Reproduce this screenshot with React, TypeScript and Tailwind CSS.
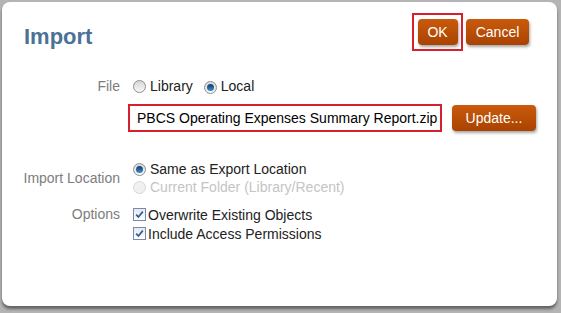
import React from "react";

const font = { fontFamily: '"Liberation Sans", Arial, sans-serif' };

function Radio({ checked, disabled }: { checked?: boolean; disabled?: boolean }) {
  return (
    <span
      className={`inline-flex items-center justify-center w-[13px] h-[13px] rounded-full border ${
        disabled ? "border-[#d8d8d8] bg-[#f0f0f0]" : "border-[#8e8f8f] bg-gradient-to-b from-[#d6d6d6] to-[#f8f8f8]"
      }`}
    >
      {checked && (
        <span className="w-[7px] h-[7px] rounded-full bg-gradient-to-b from-[#0f3b6a] to-[#3f8fd0]" />
      )}
    </span>
  );
}

function Check() {
  return (
    <span className="inline-flex items-center justify-center w-[13px] h-[13px] border border-[#7a8aa8] bg-gradient-to-b from-[#e4e8f0] to-[#ffffff]">
      <svg width="9" height="9" viewBox="0 0 9 9">
        <path d="M1.2 4.6 L3.4 7 L7.8 1.6" stroke="#2f5c9a" strokeWidth="1.7" fill="none" />
      </svg>
    </span>
  );
}

function Btn({ children, w }: { children: React.ReactNode; w: string }) {
  return (
    <button
      className={`${w} h-[26px] rounded-[4px] bg-gradient-to-b from-[#c95a0c] to-[#a94302] text-white text-[14px] shadow-[1px_2px_3px_rgba(0,0,0,0.35)] flex items-center justify-center`}
    >
      {children}
    </button>
  );
}

export default function App() {
  return (
    <div className="w-[561px] h-[313px] bg-[#b4b4b4] pt-[2px] pl-[2px]" style={font}>
      <div className="w-[555px] h-[304px] bg-white rounded-[8px] shadow-[0_3px_3px_rgba(0,0,0,0.45)] flex flex-col">
        <div className="flex items-start h-[70px]">
          <div className="pl-[22px] pt-[20px] text-[22px] font-bold text-[#4c7196] leading-[30px]">Import</div>
          <div className="ml-auto flex items-center pt-[11px] pr-[28px]">
            <div className="border-2 border-[#d7202e] w-[51px] h-[38px] flex items-center justify-center">
              <Btn w="w-[40px]">OK</Btn>
            </div>
            <div className="ml-[3px]">
              <Btn w="w-[63px]">Cancel</Btn>
            </div>
          </div>
        </div>

        <div className="grid grid-cols-[118px_1fr] text-[14px] leading-[18px]">
          <div className="text-right text-[#7d7d7d] pt-[5px]">File</div>
          <div className="flex items-center gap-[3px] pl-[13px] pt-[5px] text-[#222]">
            <Radio />
            <span className="ml-[1px]">Library</span>
            <span className="ml-[8px]"><Radio checked /></span>
            <span className="ml-[1px]">Local</span>
          </div>

          <div />
          <div className="flex items-center pl-[8px] pt-[9px]">
            <div className="border-2 border-[#d7202e] w-[314px] h-[28px] flex items-center pl-[7px] text-black text-[14px]">
              PBCS Operating Expenses Summary Report.zip
            </div>
            <div className="ml-[10px]">
              <Btn w="w-[84px]">Update...</Btn>
            </div>
          </div>

          <div className="col-span-2 h-[28px]" />

          <div className="text-right text-[#7d7d7d] flex items-center justify-end">Import Location</div>
          <div className="flex flex-col pl-[13px] text-[#222]">
            <div className="flex items-center gap-[3px] h-[18px]">
              <Radio checked />
              <span className="ml-[1px]">Same as Export Location</span>
            </div>
            <div className="flex items-center gap-[3px] h-[18px] text-[#c4c4c4]">
              <Radio disabled />
              <span className="ml-[1px]">Current Folder (Library/Recent)</span>
            </div>
          </div>

          <div className="col-span-2 h-[9px]" />

          <div className="text-right text-[#7d7d7d]">Options</div>
          <div className="flex flex-col pl-[13px] text-[#222]">
            <div className="flex items-center gap-[2px] h-[19px]">
              <Check />
              <span>Overwrite Existing Objects</span>
            </div>
            <div className="flex items-center gap-[2px] h-[19px]">
              <Check />
              <span>Include Access Permissions</span>
            </div>
          </div>
        </div>
      </div>
    </div>
  );
}
